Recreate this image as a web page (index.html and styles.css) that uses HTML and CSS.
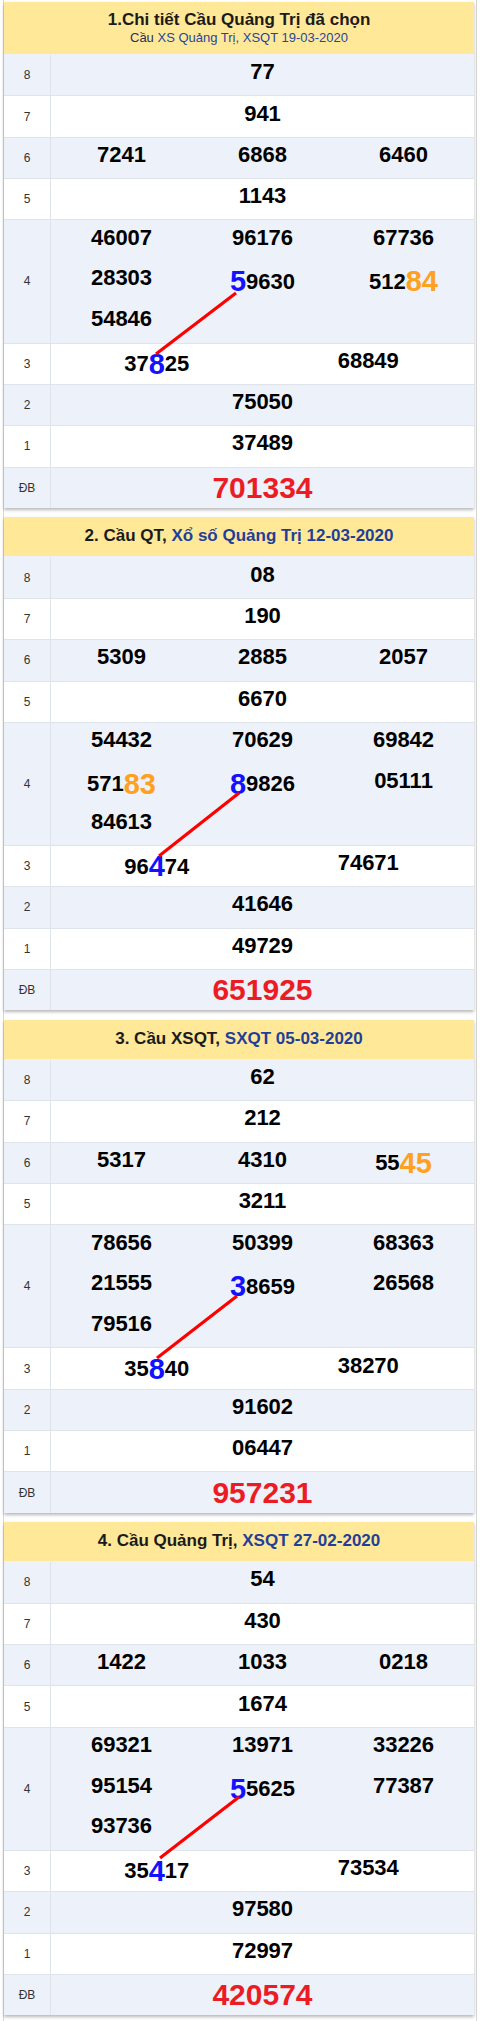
FILE: index.html
```html
<!DOCTYPE html>
<html lang="vi">
<head>
<meta charset="utf-8">
<title>Cầu Quảng Trị</title>
<link rel="stylesheet" href="styles.css">
</head>
<body>
<main class="page">

<section class="box">
  <header class="hd two">
    <div class="t1">1.Chi tiết Cầu Quảng Trị đã chọn</div>
    <div class="t2">Cầu <a class="lk">XS Quảng Trị, XSQT 19-03-2020</a></div>
  </header>
  <div class="bd">
    <div class="row alt"><div class="lb">8</div><div class="vals"><div class="ln">77</div></div></div>
    <div class="row"><div class="lb">7</div><div class="vals"><div class="ln">941</div></div></div>
    <div class="row alt"><div class="lb">6</div><div class="vals c3"><div class="ln">7241</div><div class="ln">6868</div><div class="ln">6460</div></div></div>
    <div class="row"><div class="lb">5</div><div class="vals"><div class="ln">1143</div></div></div>
    <div class="row alt r4"><div class="lb">4</div>
      <div class="vals c3">
        <div class="col"><div class="ln">46007</div><div class="ln">28303</div><div class="ln">54846</div></div>
        <div class="col"><div class="ln">96176</div><div class="ln big"><span class="b">5</span>9630</div></div>
        <div class="col"><div class="ln">67736</div><div class="ln big">512<span class="o">84</span></div></div>
      </div>
    </div>
    <div class="row"><div class="lb">3</div><div class="vals c2"><div class="ln big">37<span class="b">8</span>25</div><div class="ln">68849</div></div></div>
    <div class="row alt"><div class="lb">2</div><div class="vals"><div class="ln">75050</div></div></div>
    <div class="row"><div class="lb">1</div><div class="vals"><div class="ln">37489</div></div></div>
    <div class="row alt"><div class="lb">ĐB</div><div class="vals"><div class="ln db">701334</div></div></div>
    <svg class="link" aria-hidden="true"><line x1="232" y1="239" x2="152" y2="300"/></svg>
  </div>
</section>

<section class="box">
  <header class="hd one">2. Cầu QT, <a class="lk">Xổ số Quảng Trị 12-03-2020</a></header>
  <div class="bd">
    <div class="row alt"><div class="lb">8</div><div class="vals"><div class="ln">08</div></div></div>
    <div class="row"><div class="lb">7</div><div class="vals"><div class="ln">190</div></div></div>
    <div class="row alt"><div class="lb">6</div><div class="vals c3"><div class="ln">5309</div><div class="ln">2885</div><div class="ln">2057</div></div></div>
    <div class="row"><div class="lb">5</div><div class="vals"><div class="ln">6670</div></div></div>
    <div class="row alt r4"><div class="lb">4</div>
      <div class="vals c3">
        <div class="col"><div class="ln">54432</div><div class="ln big">571<span class="o">83</span></div><div class="ln">84613</div></div>
        <div class="col"><div class="ln">70629</div><div class="ln big"><span class="b">8</span>9826</div></div>
        <div class="col"><div class="ln">69842</div><div class="ln">05111</div></div>
      </div>
    </div>
    <div class="row"><div class="lb">3</div><div class="vals c2"><div class="ln big">96<span class="b">4</span>74</div><div class="ln">74671</div></div></div>
    <div class="row alt"><div class="lb">2</div><div class="vals"><div class="ln">41646</div></div></div>
    <div class="row"><div class="lb">1</div><div class="vals"><div class="ln">49729</div></div></div>
    <div class="row alt"><div class="lb">ĐB</div><div class="vals"><div class="ln db">651925</div></div></div>
    <svg class="link" aria-hidden="true"><line x1="235" y1="237" x2="155" y2="300"/></svg>
  </div>
</section>

<section class="box">
  <header class="hd one">3. Cầu XSQT, <a class="lk">SXQT 05-03-2020</a></header>
  <div class="bd">
    <div class="row alt"><div class="lb">8</div><div class="vals"><div class="ln">62</div></div></div>
    <div class="row"><div class="lb">7</div><div class="vals"><div class="ln">212</div></div></div>
    <div class="row alt"><div class="lb">6</div><div class="vals c3"><div class="ln">5317</div><div class="ln">4310</div><div class="ln big">55<span class="o">45</span></div></div></div>
    <div class="row"><div class="lb">5</div><div class="vals"><div class="ln">3211</div></div></div>
    <div class="row alt r4"><div class="lb">4</div>
      <div class="vals c3">
        <div class="col"><div class="ln">78656</div><div class="ln">21555</div><div class="ln">79516</div></div>
        <div class="col"><div class="ln">50399</div><div class="ln big"><span class="b">3</span>8659</div></div>
        <div class="col"><div class="ln">68363</div><div class="ln">26568</div></div>
      </div>
    </div>
    <div class="row"><div class="lb">3</div><div class="vals c2"><div class="ln big">35<span class="b">8</span>40</div><div class="ln">38270</div></div></div>
    <div class="row alt"><div class="lb">2</div><div class="vals"><div class="ln">91602</div></div></div>
    <div class="row"><div class="lb">1</div><div class="vals"><div class="ln">06447</div></div></div>
    <div class="row alt"><div class="lb">ĐB</div><div class="vals"><div class="ln db">957231</div></div></div>
    <svg class="link" aria-hidden="true"><line x1="233" y1="237" x2="153" y2="299"/></svg>
  </div>
</section>

<section class="box">
  <header class="hd one">4. Cầu Quảng Trị, <a class="lk">XSQT 27-02-2020</a></header>
  <div class="bd">
    <div class="row alt"><div class="lb">8</div><div class="vals"><div class="ln">54</div></div></div>
    <div class="row"><div class="lb">7</div><div class="vals"><div class="ln">430</div></div></div>
    <div class="row alt"><div class="lb">6</div><div class="vals c3"><div class="ln">1422</div><div class="ln">1033</div><div class="ln">0218</div></div></div>
    <div class="row"><div class="lb">5</div><div class="vals"><div class="ln">1674</div></div></div>
    <div class="row alt r4"><div class="lb">4</div>
      <div class="vals c3">
        <div class="col"><div class="ln">69321</div><div class="ln">95154</div><div class="ln">93736</div></div>
        <div class="col"><div class="ln">13971</div><div class="ln big"><span class="b">5</span>5625</div></div>
        <div class="col"><div class="ln">33226</div><div class="ln">77387</div></div>
      </div>
    </div>
    <div class="row"><div class="lb">3</div><div class="vals c2"><div class="ln big">35<span class="b">4</span>17</div><div class="ln">73534</div></div></div>
    <div class="row alt"><div class="lb">2</div><div class="vals"><div class="ln">97580</div></div></div>
    <div class="row"><div class="lb">1</div><div class="vals"><div class="ln">72997</div></div></div>
    <div class="row alt"><div class="lb">ĐB</div><div class="vals"><div class="ln db">420574</div></div></div>
    <svg class="link" aria-hidden="true"><line x1="235" y1="236" x2="156" y2="297"/></svg>
  </div>
</section>

</main>
</body>
</html>
```

FILE: styles.css
```css
html, body {
  margin: 0;
  padding: 0;
  background: #ffffff;
}

body {
  font-family: "Liberation Sans", Arial, sans-serif;
  color: #000;
}

.page {
  margin: 0 3px;
  border-left: 1px solid #d6d6d6;
  border-right: 1px solid #d6d6d6;
  padding: 2px 2px 4px 0;
}

.box {
  background: #fff;
  box-shadow: 0 2px 3px rgba(0, 0, 0, 0.28);
  margin-bottom: 9.5px;
}

.hd {
  background: #ffe898;
  text-align: center;
  color: #1b1b1b;
}

.hd.two {
  height: 52px;
  box-sizing: border-box;
  padding-top: 8px;
}

.hd.two .t1 {
  font-size: 17px;
  font-weight: bold;
  line-height: 20px;
}

.hd.two .t2 {
  font-size: 13px;
  line-height: 16px;
  color: #2a2f55;
}

.hd.two .t2 .lk {
  color: #2446a0;
  font-weight: normal;
}

.hd.one {
  height: 39px;
  box-sizing: border-box;
  padding-top: 9px;
  font-size: 17px;
  font-weight: bold;
  line-height: 20px;
}

.lk {
  color: #1f3f98;
  text-decoration: none;
}

.bd {
  position: relative;
}

.row {
  display: grid;
  grid-template-columns: 47px 1fr;
  border-top: 1px solid #dfe3ea;
  background: #fff;
}

.row:first-child {
  border-top-color: #edf1f9;
}

.row.alt {
  background: #edf1f9;
}

.lb {
  display: flex;
  align-items: center;
  justify-content: center;
  border-right: 1px solid #dfe3ea;
  font-size: 12px;
  color: #333;
}

.vals {
  display: grid;
  grid-template-columns: 1fr;
}

.vals.c3 {
  grid-template-columns: repeat(3, 1fr);
}

.vals.c2 {
  grid-template-columns: repeat(2, 1fr);
}

.col {
  display: flex;
  flex-direction: column;
}

.ln {
  height: 40.36px;
  box-sizing: border-box;
  padding-bottom: 6px;
  display: flex;
  align-items: center;
  justify-content: center;
  font-size: 22px;
  font-weight: bold;
  white-space: nowrap;
}

.r4 .ln {
  height: 40.7px;
}

.ln.big {
  padding-bottom: 0;
  padding-top: 1px;
}

.ln .b {
  font-size: 29px;
  color: #1212ff;
}

.ln .o {
  font-size: 29px;
  color: #ffa020;
}

.ln.db {
  padding-bottom: 0;
  font-size: 30px;
  color: #ec1c24;
}

.link {
  position: absolute;
  left: 0;
  top: 0;
  width: 100%;
  height: 100%;
  pointer-events: none;
  overflow: visible;
}

.link line {
  stroke: #ff0000;
  stroke-width: 3.2;
  stroke-linecap: butt;
}
```
